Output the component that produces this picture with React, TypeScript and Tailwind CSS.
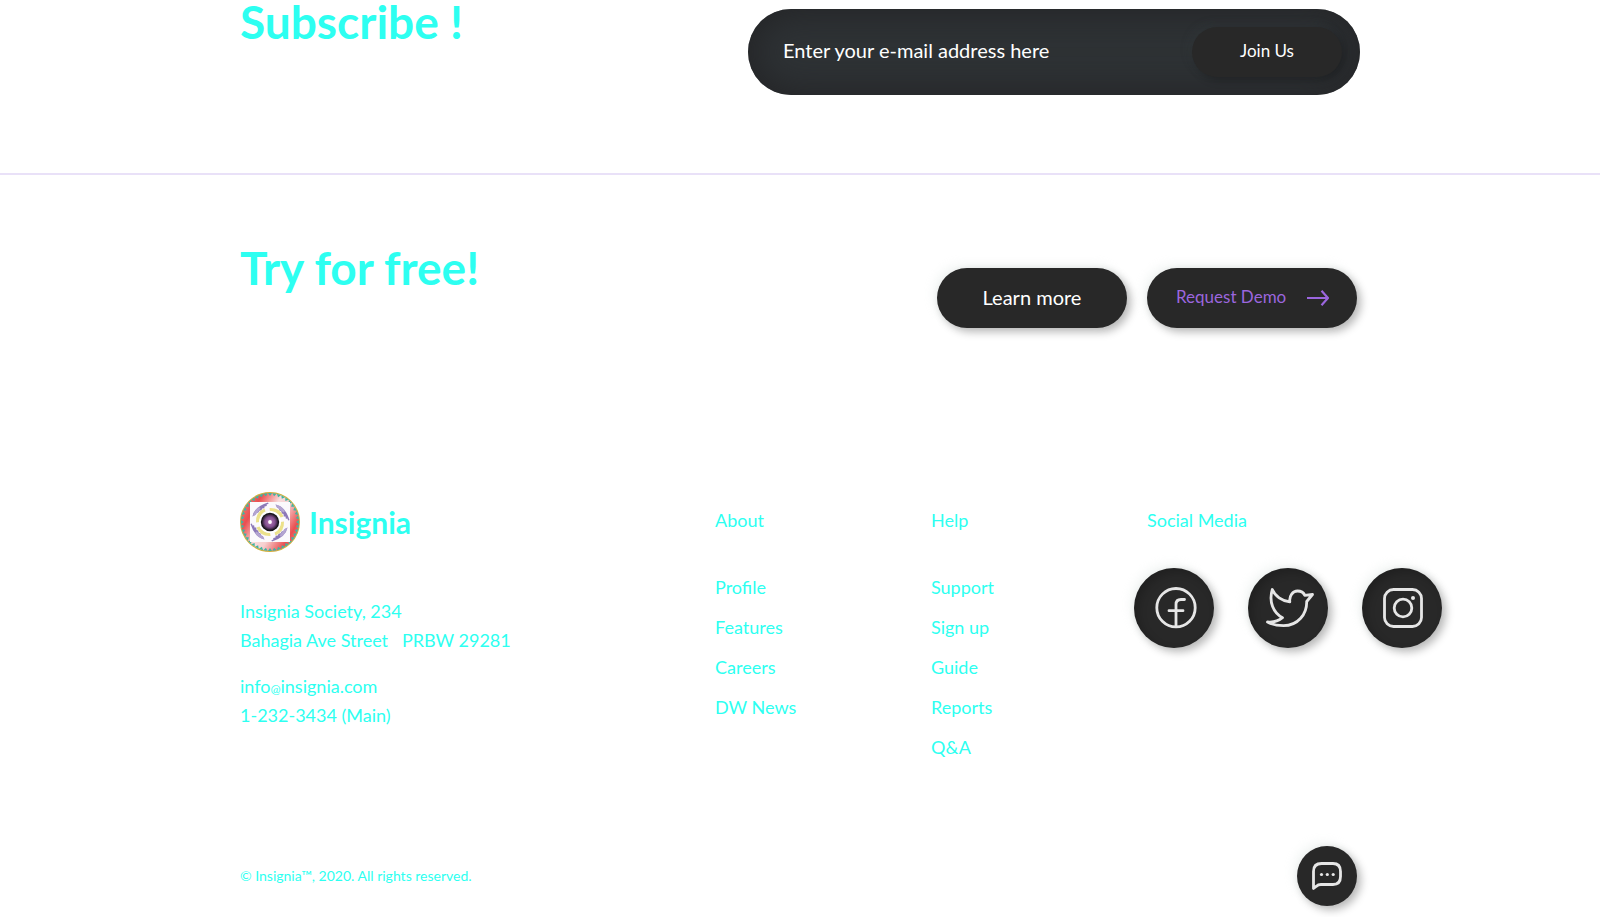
import type { ReactNode } from "react";

const aboutLinks = ["Profile", "Features", "Careers", "DW News"];
const helpLinks = ["Support", "Sign up", "Guide", "Reports", "Q&A"];

function Logo() {
  const teeth = Array.from({ length: 40 }, (_, i) => i * 9);
  return (
    <svg viewBox="0 0 60 60" className="size-15 shrink-0" aria-hidden="true">
      <defs>
        <linearGradient id="ring" x1="0" y1="0.2" x2="1" y2="0.8">
          <stop offset="0" stopColor="#f07a78" />
          <stop offset="0.2" stopColor="#ea4f50" />
          <stop offset="0.45" stopColor="#f9dcdc" />
          <stop offset="0.6" stopColor="#f6cfcf" />
          <stop offset="0.85" stopColor="#ea4f50" />
          <stop offset="1" stopColor="#f07a78" />
        </linearGradient>
        <radialGradient id="core">
          <stop offset="0" stopColor="#b876b8" />
          <stop offset="0.55" stopColor="#81508f" />
          <stop offset="0.75" stopColor="#4a2f52" />
          <stop offset="0.9" stopColor="#17141a" />
          <stop offset="1" stopColor="#17141a" />
        </radialGradient>
      </defs>
      <circle cx="30" cy="30" r="29.4" fill="url(#ring)" stroke="#d3b13c" strokeWidth="1.1" />
      {teeth.map((a) => (
        <path key={a} d="M27.9 1.100h4.200L30 3.900z" fill="#3fb5a3" transform={`rotate(${a} 30 30)`} />
      ))}
      <rect x="10" y="10" width="40" height="40" fill="#fbf9fc" />
      {[0, 90, 180, 270].map((a) => (
        <g key={a} transform={`rotate(${a} 30 30)`}>
          <path d="M12.500 24.500Q14 15 28 10.500l.6 1.300-2 .8.2 1.500-2.300.4-.1 1.700-2.300.3-.6 1.800-2.200.4-.9 1.900-2 .7-1 1.800z" fill="#8c78b8" />
          <path d="M12.500 24.500q1.500-6 6.500-9.500l1.500 1.500-4 5.500z" fill="#c3b7dc" opacity="0.7" />
          <path d="M16 30.500Q15.500 20 24.500 16.500l1 3Q19.500 22 19.500 30z" fill="#ece18a" />
        </g>
      ))}
      <circle cx="30" cy="30" r="11" fill="#fff" />
      <circle cx="30" cy="30" r="9.200" fill="url(#core)" />
      <circle cx="30" cy="30" r="1.900" fill="#fff" />
    </svg>
  );
}

function LinkColumn({ title, links }: { title: string; links: string[] }) {
  return (
    <nav aria-label={title} className="mt-2 leading-10">
      <h3>{title}</h3>
      <ul className="mt-[27px]">
        {links.map((link) => (
          <li key={link}>
            <a href="#">{link}</a>
          </li>
        ))}
      </ul>
    </nav>
  );
}

function SocialLink({ label, children }: { label: string; children: ReactNode }) {
  return (
    <a
      href="#"
      aria-label={label}
      className="flex size-20 shrink-0 items-center justify-center rounded-full bg-[#282828] pl-1 shadow-[4px_4px_8px_rgba(0,0,0,0.28),-4px_-4px_10px_rgba(200,215,210,0.22),inset_4px_4px_8px_rgba(0,0,0,0.2)]"
    >
      <svg
        viewBox="0 0 48 48"
        className="size-12"
        fill="none"
        stroke="#e6e6e6"
        strokeWidth="2.8"
        strokeLinecap="round"
        strokeLinejoin="round"
      >
        {children}
      </svg>
    </a>
  );
}

export default function App() {
  return (
    <div className="bg-white font-['Lato',sans-serif] text-lg text-[#2dfff1]">
      <section className="flex items-start justify-between border-b-2 border-[#e9e1f8] px-[15%] pb-[78px]">
        <h2 className="text-[46px] leading-11 font-bold">Subscribe !</h2>
        <form
          className="mt-[9px] flex h-[86px] w-[612px] items-center rounded-full bg-[#2e3235] pr-[18px] pl-[35px] shadow-[inset_0_0_40px_#222224]"
          onSubmit={(e) => e.preventDefault()}
        >
          <input
            type="email"
            aria-label="E-mail address"
            placeholder="Enter your e-mail address here"
            className="min-w-0 flex-1 bg-transparent pb-1 text-xl text-white outline-none placeholder:text-white"
          />
          <button
            type="submit"
            className="h-[50px] w-[150px] rounded-full bg-[#282828] pb-0.5 text-[17px] text-white shadow-[3px_3px_8px_rgba(0,0,0,0.25),-3px_-3px_8px_rgba(60,66,70,0.25)]"
          >
            Join Us
          </button>
        </form>
      </section>

      <section className="flex items-start justify-between px-[15%] pt-[71px]">
        <h2 className="text-[46px] leading-11 font-bold">Try for free!</h2>
        <div className="mt-[22px] flex gap-5 pr-[3px]">
          <button className="h-15 w-[190px] rounded-full bg-[#282828] pb-0.5 text-xl text-white shadow-[4px_4px_8px_rgba(0,0,0,0.28),-4px_-4px_10px_rgba(200,215,210,0.22)]">
            Learn more
          </button>
          <button className="flex h-15 w-[210px] items-center justify-between rounded-full bg-[#282828] pr-7 pl-[29px] text-[17px] text-[#9b66de] shadow-[4px_4px_8px_rgba(0,0,0,0.28),-4px_-4px_10px_rgba(200,215,210,0.22)]">
            <span className="pb-0.5">Request Demo</span>
            <svg viewBox="0 0 22 16" className="h-4 w-[22px]" fill="none" stroke="currentColor" strokeWidth="2.2">
              <path d="M0 8h21M14.500 .8l6.500 7.200-6.500 7.200" />
            </svg>
          </button>
        </div>
      </section>

      <footer className="px-[15%] pt-[164px] pb-[11px]">
        <div className="grid grid-cols-[minmax(0,475fr)_minmax(0,216fr)_minmax(0,216fr)_minmax(0,213fr)]">
          <div>
            <div className="flex items-center gap-[9px]">
              <Logo />
              <span className="text-[30px] leading-15 font-bold">Insignia</span>
            </div>
            <address className="mt-[45px] leading-[29px] not-italic">
              <p>Insignia Society, 234</p>
              <p className="whitespace-pre">Bahagia Ave Street{"   "}PRBW 29281</p>
              <p className="mt-[17px]">
                <a href="mailto:info@insignia.com">
                  info<span className="text-xs">@</span>insignia.com
                </a>
              </p>
              <p>1-232-3434 (Main)</p>
            </address>
          </div>
          <LinkColumn title="About" links={aboutLinks} />
          <LinkColumn title="Help" links={helpLinks} />
          <div className="mt-2">
            <h3 className="leading-10">Social Media</h3>
            <div className="mt-7 -ml-[13px] flex gap-[34px]">
              <SocialLink label="Facebook">
                <circle cx="24" cy="23.700" r="19.200" />
                <path d="M24 42.500V20.500q0-5 5-5H32.500M17 26.700h14" />
              </SocialLink>
              <SocialLink label="Twitter">
                <path d="M6.300 5.500C9 12 16 17 23.800 17.800C23 11.500 27 7 31.500 7c3.500 0 6 1.500 7.300 4.300l7.700-.8-5.800 7C41 30 32 41.700 17.500 41.700c-6 0-11-1-16-3.700 6 .5 11-1 15-4.300C7.500 29 2.500 18 6.300 5.500z" />
              </SocialLink>
              <SocialLink label="Instagram">
                <rect x="4.500" y="5.500" width="37" height="37" rx="9" />
                <circle cx="23" cy="24" r="8.800" />
                <circle cx="33" cy="14" r="2" fill="#e6e6e6" stroke="none" />
              </SocialLink>
            </div>
          </div>
        </div>
        <div className="mt-[79px] flex items-center justify-between pr-[3px]">
          <p className="text-sm">© Insignia™, 2020. All rights reserved.</p>
          <button
            aria-label="Open chat"
            className="flex size-15 items-center justify-center rounded-full bg-[#282828] shadow-[4px_4px_8px_rgba(0,0,0,0.28),-4px_-4px_10px_rgba(200,215,210,0.22)]"
          >
            <svg viewBox="0 0 30 28" className="h-7 w-[30px]" fill="none" stroke="#e6e6e6" strokeWidth="2.800" strokeLinejoin="round">
              <path d="M1.500 26.500V9.500q0-8 8-8H21q7.500 0 7.500 8v5q0 8-7.500 8H9q-3 0-4.500 1.700z" />
              <g fill="#e6e6e6" stroke="none">
                <circle cx="9.500" cy="12.500" r="1.600" />
                <circle cx="15.300" cy="12.500" r="1.600" />
                <circle cx="21.200" cy="12.500" r="1.600" />
              </g>
            </svg>
          </button>
        </div>
      </footer>
    </div>
  );
}
